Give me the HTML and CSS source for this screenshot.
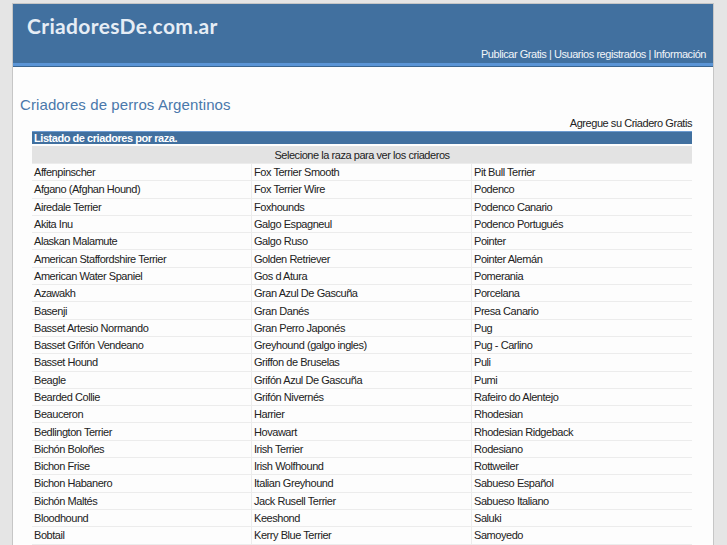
FILE: index.html
```html
<!DOCTYPE html>
<html lang="es">
<head>
    <meta charset="UTF-8">
    <title>Criadores de perros Argentinos</title>
    <link rel="stylesheet" href="styles.css">
</head>
<body>

    <div class="pagina">
        <!-- Cabecera -->
        <div class="cabecera">
            <div class="logo">CriadoresDe.com.ar</div>
            <div class="menu">
                <a href="#">Publicar Gratis</a> | <a href="#">Usuarios registrados</a> | <a href="#">Información</a>
            </div>
        </div>

        <!-- Contenido -->
        <div class="contenido">
            <h1>Criadores de perros Argentinos</h1>
            <div class="agregue"><a href="#">Agregue su Criadero Gratis</a></div>

            <table class="razas">
                <tr><th colspan="3" class="titulo">Listado de criadores por raza.</th></tr>
                <tr><td colspan="3" class="selecione">Selecione la raza para ver los criaderos</td></tr>
                <tr><td>Affenpinscher</td><td>Fox Terrier Smooth</td><td>Pit Bull Terrier</td></tr>
                <tr><td>Afgano (Afghan Hound)</td><td>Fox Terrier Wire</td><td>Podenco</td></tr>
                <tr><td>Airedale Terrier</td><td>Foxhounds</td><td>Podenco Canario</td></tr>
                <tr><td>Akita Inu</td><td>Galgo Espagneul</td><td>Podenco Portugués</td></tr>
                <tr><td>Alaskan Malamute</td><td>Galgo Ruso</td><td>Pointer</td></tr>
                <tr><td>American Staffordshire Terrier</td><td>Golden Retriever</td><td>Pointer Alemán</td></tr>
                <tr><td>American Water Spaniel</td><td>Gos d Atura</td><td>Pomerania</td></tr>
                <tr><td>Azawakh</td><td>Gran Azul De Gascuña</td><td>Porcelana</td></tr>
                <tr><td>Basenji</td><td>Gran Danés</td><td>Presa Canario</td></tr>
                <tr><td>Basset Artesio Normando</td><td>Gran Perro Japonés</td><td>Pug</td></tr>
                <tr><td>Basset Grifón Vendeano</td><td>Greyhound (galgo ingles)</td><td>Pug - Carlino</td></tr>
                <tr><td>Basset Hound</td><td>Griffon de Bruselas</td><td>Puli</td></tr>
                <tr><td>Beagle</td><td>Grifón Azul De Gascuña</td><td>Pumi</td></tr>
                <tr><td>Bearded Collie</td><td>Grifón Nivernés</td><td>Rafeiro do Alentejo</td></tr>
                <tr><td>Beauceron</td><td>Harrier</td><td>Rhodesian</td></tr>
                <tr><td>Bedlington Terrier</td><td>Hovawart</td><td>Rhodesian Ridgeback</td></tr>
                <tr><td>Bichón Boloñes</td><td>Irish Terrier</td><td>Rodesiano</td></tr>
                <tr><td>Bichon Frise</td><td>Irish Wolfhound</td><td>Rottweiler</td></tr>
                <tr><td>Bichon Habanero</td><td>Italian Greyhound</td><td>Sabueso Español</td></tr>
                <tr><td>Bichón Maltés</td><td>Jack Rusell Terrier</td><td>Sabueso Italiano</td></tr>
                <tr><td>Bloodhound</td><td>Keeshond</td><td>Saluki</td></tr>
                <tr><td>Bobtail</td><td>Kerry Blue Terrier</td><td>Samoyedo</td></tr>
            </table>
        </div>
    </div>

</body>
</html>
```

FILE: styles.css
```css
/* Generales */
* {
    box-sizing: border-box;
    margin: 0;
    padding: 0;
}

body {
    background: #e5e5e5;
    font-family: 'Liberation Sans', Arial, sans-serif;
    font-size: 11px;
    letter-spacing: -0.45px;
    color: #222;
}

a {
    color: inherit;
    text-decoration: none;
}

.pagina {
    width: 702px;
    margin: 3px 0 0 12px;
    background: #fdfdfd;
    border: 1px solid #c6c6c6;
    border-bottom: none;
}

/* Cabecera */
.cabecera {
    background: #41709f;
    height: 62px;
    border-bottom: 3px solid #5b95d6;
    box-shadow: 0 1px 0 #3a6590;
    display: flex;
    flex-direction: column;
    justify-content: space-between;
    padding: 9px 7px 3px 14px;
}

.logo {
    font-family: 'Lato', sans-serif;
    font-weight: bold;
    font-size: 21px;
    letter-spacing: 0.35px;
    color: #e6edf5;
}

.menu {
    text-align: right;
    color: #f2f5f9;
}

/* Contenido */
.contenido {
    padding: 30px 21px 0 7px;
}

h1 {
    font-weight: normal;
    font-size: 15px;
    color: #4a78ab;
    letter-spacing: 0.1px;
}

.agregue {
    text-align: right;
    margin-top: 4px;
}

/* Tabla */
.razas {
    width: 660px;
    margin-left: 12px;
    border-collapse: separate;
    border-spacing: 0;
    margin-top: 2px;
}

.razas td {
    width: 220px;
    height: 17.3px;
    padding: 0 2px;
    background: #fdfdfd;
    border-bottom: 1px solid #ececec;
    border-right: 1px solid #ececec;
}

.razas td:last-child {
    border-right: none;
}

.razas .titulo {
    background: #41709f;
    color: #fff;
    text-align: left;
    font-weight: bold;
    padding: 0 2px;
    height: 15px;
    border-top: 1px solid #6b9ad0;
    border-bottom: 2px solid #fdfdfd;
}

.razas .selecione {
    background: #e3e3e3;
    text-align: center;
    height: 18px;
    border-right: none;
}
```
